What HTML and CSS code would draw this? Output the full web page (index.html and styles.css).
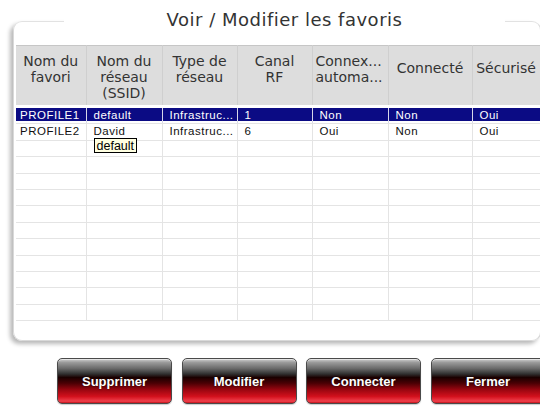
FILE: index.html
```html
<!DOCTYPE html>
<html lang="fr">
<head>
<meta charset="utf-8">
<title>Voir / Modifier les favoris</title>
<link rel="stylesheet" href="styles.css">
</head>
<body>
<section class="panel">
  <h1 class="title">Voir / Modifier les favoris</h1>
  <table class="grid">
    <colgroup>
      <col class="c1"><col class="c2"><col class="c3"><col class="c4"><col class="c5"><col class="c6"><col class="c7">
    </colgroup>
    <thead>
      <tr>
        <th>Nom du<br>favori</th>
        <th>Nom du<br>réseau<br>(SSID)</th>
        <th>Type de<br>réseau</th>
        <th>Canal<br>RF</th>
        <th class="left">Connex...<br>automa...</th>
        <th class="single">Connecté</th>
        <th class="single">Sécurisé</th>
      </tr>
    </thead>
    <tbody>
      <tr class="spacer"><td></td><td></td><td></td><td></td><td></td><td></td><td></td></tr>
      <tr class="selected"><td class="first">PROFILE1</td><td>default</td><td>Infrastruc...</td><td>1</td><td>Non</td><td>Non</td><td>Oui</td></tr>
      <tr><td class="first">PROFILE2</td><td class="tipcell">David<span class="tooltip">default</span></td><td>Infrastruc...</td><td>6</td><td>Oui</td><td>Non</td><td>Oui</td></tr>
      <tr><td></td><td></td><td></td><td></td><td></td><td></td><td></td></tr>
      <tr><td></td><td></td><td></td><td></td><td></td><td></td><td></td></tr>
      <tr><td></td><td></td><td></td><td></td><td></td><td></td><td></td></tr>
      <tr><td></td><td></td><td></td><td></td><td></td><td></td><td></td></tr>
      <tr><td></td><td></td><td></td><td></td><td></td><td></td><td></td></tr>
      <tr><td></td><td></td><td></td><td></td><td></td><td></td><td></td></tr>
      <tr><td></td><td></td><td></td><td></td><td></td><td></td><td></td></tr>
      <tr><td></td><td></td><td></td><td></td><td></td><td></td><td></td></tr>
      <tr><td></td><td></td><td></td><td></td><td></td><td></td><td></td></tr>
      <tr><td></td><td></td><td></td><td></td><td></td><td></td><td></td></tr>
      <tr><td></td><td></td><td></td><td></td><td></td><td></td><td></td></tr>
    </tbody>
  </table>
</section>
<div class="buttons">
  <button class="btn">Supprimer</button>
  <button class="btn">Modifier</button>
  <button class="btn">Connecter</button>
  <button class="btn">Fermer</button>
</div>
</body>
</html>
```
FILE: styles.css
```css
html, body {
  margin: 0;
  padding: 0;
}
body {
  width: 540px;
  height: 410px;
  overflow: hidden;
  background: #ffffff;
  font-family: "DejaVu Sans", Verdana, sans-serif;
  color: #333;
}
.panel {
  margin: 21px 0 0 13px;
  width: 528px;
  height: 320px;
  box-sizing: border-box;
  border: 1px solid #d9d9d9;
  border-top-color: #e2e2e2;
  border-radius: 9px;
  padding: 0 0 0 2px;
  box-shadow: -3px 3px 4px rgba(0, 0, 0, 0.28);
}
.title {
  margin: -13px 0 0 48px;
  width: 441px;
  padding: 0;
  text-align: center;
  font-size: 18px;
  font-weight: normal;
  line-height: 22px;
  letter-spacing: 0.5px;
  color: #333;
  background: #fff;
}
.grid {
  margin-top: 14px;
  border-collapse: collapse;
  table-layout: fixed;
  width: 524px;
}
.c1 { width: 70px; }
.c2 { width: 76px; }
.c3 { width: 75px; }
.c4 { width: 75px; }
.c5 { width: 76px; }
.c6 { width: 84px; }
.c7 { width: 68px; }
.grid th {
  height: 59px;
  box-sizing: border-box;
  padding: 7px 2px 0 2px;
  vertical-align: top;
  background: #dddddd;
  border-top: 1px solid #c6c6c6;
  border-left: 1px solid #f2f2f2;
  border-right: 1px solid #cfcfcf;
  font-weight: normal;
  font-size: 14px;
  line-height: 16px;
  color: #333;
  text-align: center;
  white-space: nowrap;
  overflow: hidden;
}
.grid th:first-child { border-left: none; }
.grid th.left { text-align: left; padding-left: 3px; }
.grid th.single { padding-top: 14px; }
.grid td {
  height: 16.4px;
  box-sizing: border-box;
  padding: 0 0 0 7px;
  border-right: 1px solid #e4e4e4;
  border-bottom: 1px solid #e4e4e4;
  font-family: "Liberation Sans", Arial, sans-serif;
  font-size: 11.5px;
  letter-spacing: 0.5px;
  line-height: 15px;
  color: #111;
  white-space: nowrap;
  overflow: visible;
  vertical-align: top;
}
.grid td.first { padding-left: 4px; }
.grid tr.spacer td {
  height: 3px;
  border-bottom: none;
  border-right-color: #ffffff;
}
.grid tr.selected td {
  color: #ffffff;
  background: linear-gradient(#0b0b84 0, #0b0b84 13px, transparent 13px);
  border-right-color: #d8d8e8;
}
.tipcell { position: relative; }
.tooltip {
  position: absolute;
  left: 7px;
  top: 14px;
  padding: 0 2px;
  height: 15px;
  line-height: 14px;
  box-sizing: border-box;
  border: 1px solid #000;
  background: #ffffe1;
  color: #000;
  font-size: 12.5px;
  letter-spacing: 0;
  z-index: 2;
}
.buttons {
  display: flex;
  gap: 9.5px;
  margin: 17px 0 0 57px;
}
.btn {
  flex: 0 0 auto;
  width: 115px;
  height: 46px;
  padding: 0;
  border: 1px solid #4a4a4a;
  border-radius: 5px;
  font-family: "Liberation Sans", Arial, sans-serif;
  font-weight: bold;
  font-size: 13px;
  color: #ffffff;
  text-shadow: 0 0 2px rgba(0, 0, 0, 0.7);
  background: linear-gradient(to bottom,
    #d0d0d0 0%,
    #9a9a9a 8%,
    #686868 22%,
    #303030 34%,
    #1a0000 42%,
    #4a0004 55%,
    #9a0610 70%,
    #d2101c 85%,
    #f0404c 96%,
    #c01018 100%);
  box-shadow: inset 0 1px 0 rgba(255, 255, 255, 0.5), 0 1px 1px rgba(0, 0, 0, 0.2);
}
```
